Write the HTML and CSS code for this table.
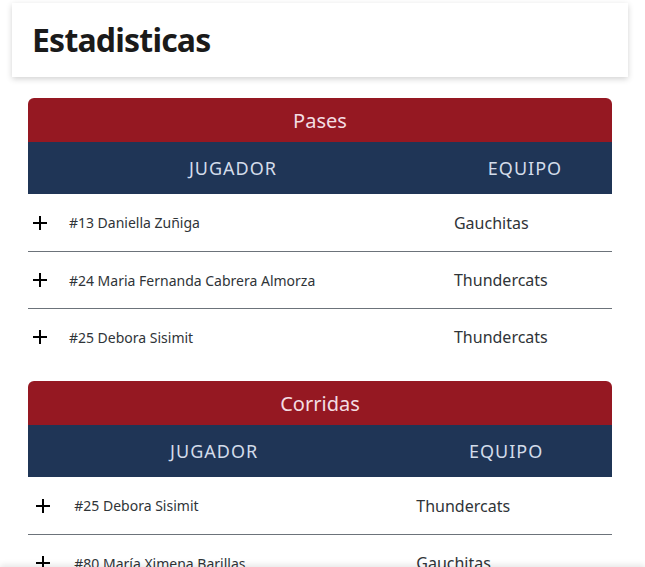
FILE: index.html
```html
<!DOCTYPE html>
<html lang="es">
<head>
<meta charset="utf-8">
<title>Estadisticas</title>
<link rel="stylesheet" href="styles.css">
</head>
<body>
<header class="page-header">
  <h1 class="page-title">Estadisticas</h1>
</header>
<main class="content">
  <table class="stats">
    <thead>
      <tr class="caption-row"><th colspan="3">Pases</th></tr>
      <tr class="head-row"><th colspan="2">JUGADOR</th><th>EQUIPO</th></tr>
    </thead>
    <tbody>
      <tr><td class="icon"><svg viewBox="0 0 14 14" width="14" height="14"><path d="M7 0v14M0 7h14" stroke="#000" stroke-width="2"/></svg></td><td class="name">#13 Daniella Zuñiga</td><td class="team">Gauchitas</td></tr>
      <tr><td class="icon"><svg viewBox="0 0 14 14" width="14" height="14"><path d="M7 0v14M0 7h14" stroke="#000" stroke-width="2"/></svg></td><td class="name">#24 Maria Fernanda Cabrera Almorza</td><td class="team">Thundercats</td></tr>
      <tr><td class="icon"><svg viewBox="0 0 14 14" width="14" height="14"><path d="M7 0v14M0 7h14" stroke="#000" stroke-width="2"/></svg></td><td class="name">#25 Debora Sisimit</td><td class="team">Thundercats</td></tr>
    </tbody>
  </table>
  <table class="stats">
    <thead>
      <tr class="caption-row"><th colspan="3">Corridas</th></tr>
      <tr class="head-row"><th colspan="2">JUGADOR</th><th>EQUIPO</th></tr>
    </thead>
    <tbody>
      <tr><td class="icon"><svg viewBox="0 0 14 14" width="14" height="14"><path d="M7 0v14M0 7h14" stroke="#000" stroke-width="2"/></svg></td><td class="name">#25 Debora Sisimit</td><td class="team">Thundercats</td></tr>
      <tr><td class="icon"><svg viewBox="0 0 14 14" width="14" height="14"><path d="M7 0v14M0 7h14" stroke="#000" stroke-width="2"/></svg></td><td class="name">#80 María Ximena Barillas</td><td class="team">Gauchitas</td></tr>
    </tbody>
  </table>
</main>
<nav class="bottom-bar"></nav>
</body>
</html>
```
FILE: styles.css
```css
html, body {
  margin: 0;
  padding: 0;
  background: #fff;
  font-family: "Noto Sans", "Open Sans", sans-serif;
  color: #333;
}
.page-header {
  margin: 3px 17px 0 12px;
  height: 74px;
  display: flex;
  align-items: center;
  padding-left: 20px;
  background: #fff;
  box-shadow: 0 2px 6px rgba(0, 0, 0, 0.18);
}
.page-title {
  margin: 0 0 2px;
  font-size: 32px;
  font-weight: 700;
  letter-spacing: -0.8px;
  color: #1a1a1a;
}
.content {
  padding: 21px 33px 0 28px;
}
.stats {
  width: 100%;
  border-collapse: collapse;
  margin-bottom: 16px;
}
.caption-row th {
  background: #951822;
  color: #f3dde2;
  font-weight: 400;
  font-size: 20px;
  height: 44px;
  padding: 0;
  border-radius: 6px 6px 0 0;
}
.head-row th {
  background: #1f3556;
  color: #d3dcea;
  font-weight: 400;
  font-size: 18px;
  letter-spacing: 1px;
  height: 52px;
  padding: 0;
}
.stats tbody td {
  height: 56px;
  border-bottom: 1px solid #6c737a;
  padding: 0 16px;
  vertical-align: middle;
}
.stats tbody tr:first-child td {
  height: 57px;
}
.stats tbody tr:last-child td {
  border-bottom: none;
}
.stats td.icon {
  padding: 0 2px;
  text-align: center;
}
.icon svg {
  display: block;
  margin: 0 auto;
}
.name {
  font-size: 14px;
  color: #2f3438;
}
.team {
  font-size: 16px;
  color: #2f3438;
}
.bottom-bar {
  position: fixed;
  left: 0;
  right: 0;
  bottom: -60px;
  height: 60px;
  background: #fff;
  box-shadow: 0 -2px 6px rgba(0, 0, 0, 0.1);
}
```
